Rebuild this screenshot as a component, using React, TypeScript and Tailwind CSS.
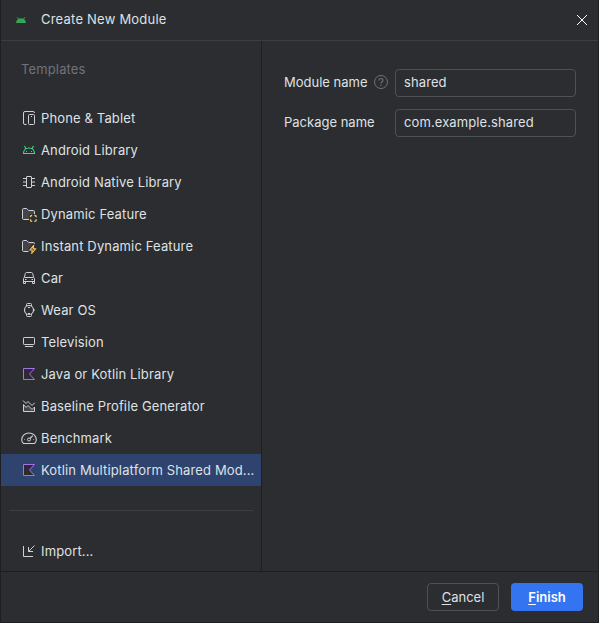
import type { ReactNode } from "react";
import clsx from "clsx";

interface Template {
  label: string;
  icon: ReactNode;
}

function Glyph({ children, color = "#ced0d6" }: { children: ReactNode; color?: string }) {
  return (
    <svg width="16" height="16" viewBox="0 0 16 16" fill="none" stroke={color} className="shrink-0">
      {children}
    </svg>
  );
}

const folder = (
  <path
    d="M8 13.500H2.500A1.200 1.200 0 0 1 1.500 12.300V3.700A1.200 1.200 0 0 1 2.700 2.500H5.700L7.700 4.500H12.300A1.200 1.200 0 0 1 13.500 5.700V8"
    fill="#43454a"
  />
);

const templates: Template[] = [
  {
    label: "Phone & Tablet",
    icon: (
      <Glyph>
        <path d="M5.500 14.500H4A1.500 1.500 0 0 1 2.500 13V3A1.500 1.500 0 0 1 4 1.500H12A1.500 1.500 0 0 1 13.500 3" />
        <rect x="7.500" y="4.500" width="6" height="10" rx="1" />
        <path d="M10 6.500H11" />
      </Glyph>
    ),
  },
  {
    label: "Android Library",
    icon: (
      <Glyph color="#3ddc84">
        <path d="M2.500 11.500C2.500 8 5 6 8 6S13.500 8 13.500 11.500ZM3.500 4 5 6.800M12.500 4 11 6.800" strokeWidth="1.100" />
        <path d="M5 9.500H6M10 9.500H11" />
      </Glyph>
    ),
  },
  {
    label: "Android Native Library",
    icon: (
      <Glyph>
        <rect x="5.500" y="2.500" width="5" height="11" rx="0.5" />
        <path d="M2 4.500H5M2 11.500H5M11 4.500H14M11 11.500H14" />
        <path d="M2 8H5M11 8H14" />
      </Glyph>
    ),
  },
  {
    label: "Dynamic Feature",
    icon: (
      <Glyph>
        {folder}
        <rect x="8" y="8" width="8" height="8" fill="#2b2d30" stroke="none" />
        <path
          d="M9.500 11.200V10.500Q9.500 9.500 10.500 9.500H11.200M13.300 9.500H14Q15.200 9.500 15.200 10.700V11.200M15.200 13.300V14Q15.200 15.300 14 15.300H13.300M11.200 15.300H10.500Q9.500 15.300 9.500 14V13.300"
          stroke="#f2c55c"
          strokeWidth="1.300"
        />
      </Glyph>
    ),
  },
  {
    label: "Instant Dynamic Feature",
    icon: (
      <Glyph>
        {folder}
        <path d="M11 6H16V16H7.500V11Z" fill="#2b2d30" stroke="none" />
        <path
          d="M12.700 7.300 8.700 12H11.200L10.700 15.500 14.800 10.700H12.200Z"
          fill="#5e4d33"
          stroke="#f2c55c"
          strokeWidth="1.100"
          strokeLinejoin="round"
        />
      </Glyph>
    ),
  },
  {
    label: "Car",
    icon: (
      <Glyph>
        <path d="M3.500 7 4.300 3.500Q4.600 2.500 5.500 2.500H10.500Q11.400 2.500 11.700 3.500L12.500 7" />
        <path d="M2.500 13.500V8.500Q2.500 7.500 3.700 7.500H12.300Q13.500 7.500 13.500 8.500V13.500H11.500V11.500H4.500V13.500Z" />
        <path d="M2.500 11.500H13.500M4 9.500H5.500M10.500 9.500H12" />
      </Glyph>
    ),
  },
  {
    label: "Wear OS",
    icon: (
      <Glyph>
        <circle cx="8" cy="8" r="4.500" strokeWidth="1.200" />
        <path d="M5.500 4V2.500Q5.500 1.500 6.500 1.500H9.500Q10.500 1.500 10.500 2.500V4M5.500 12V13.500Q5.500 14.500 6.500 14.500H9.500Q10.500 14.500 10.500 13.500V12M13 7V9M7 5.500H9M7 11.500H9" />
      </Glyph>
    ),
  },
  {
    label: "Television",
    icon: (
      <Glyph>
        <rect x="2.500" y="3.500" width="11" height="7" rx="0.7" />
        <path d="M4 12.500H12" />
      </Glyph>
    ),
  },
  {
    label: "Java or Kotlin Library",
    icon: (
      <Glyph color="#a571e6">
        <path d="M2.500 2.500H13.500L8.500 8 13.500 13.500H2.500Z" fill="#2f2936" />
      </Glyph>
    ),
  },
  {
    label: "Baseline Profile Generator",
    icon: (
      <Glyph>
        <path d="M2.500 6.500V13.500H13.500V9L11 11.500 7 7.500 5 9.500Z" fill="#43454a" />
        <path d="M2 2.500 5 5.500 7 3.500 11 7.500 13.800 4.700" />
      </Glyph>
    ),
  },
  {
    label: "Benchmark",
    icon: (
      <Glyph>
        <path d="M2.500 13.500Q.7 12.300 .7 9.800C.7 5.800 4 3 8 3S15.300 5.800 15.300 9.800Q15.300 12.300 13.500 13.500Z" strokeWidth="1.100" />
        <circle cx="8" cy="9.500" r="1.500" />
        <path d="M9 8.500 11.800 5.700" strokeWidth="1.200" />
        <path d="M3 9.500H4M12 9.500H13" strokeOpacity=".6" />
      </Glyph>
    ),
  },
  {
    label: "Kotlin Multiplatform Shared Mod...",
    icon: (
      <Glyph color="#a571e6">
        <path d="M2.500 2.500H13.500L8.500 8 13.500 13.500H2.500Z" fill="#2f2936" />
      </Glyph>
    ),
  },
];

function TemplateRow({ label, icon, selected }: Template & { selected?: boolean }) {
  return (
    <div className={clsx("flex h-8 items-center gap-1 pl-5", selected && "bg-[#2e436e]")}>
      {icon}
      <span className="whitespace-nowrap">{label}</span>
    </div>
  );
}

function Field({ label, value, help }: { label: string; value: string; help?: boolean }) {
  return (
    <div className="flex h-7 items-center">
      <label className="flex w-[111px] items-center justify-between pr-1.5 tracking-normal">
        <span className="pb-0.5">{label}</span>
        {help && (
          <svg width="16" height="16" viewBox="0 0 16 16" fill="none" stroke="#6f737a" className="mb-0.5">
            <circle cx="8" cy="8" r="6.500" />
            <path d="M6 6.500C6 3.900 10 3.900 10 6.300 10 7.800 8 7.700 8 9.500" strokeWidth="1.100" />
            <circle cx="8" cy="11.300" r=".7" fill="#6f737a" stroke="none" />
          </svg>
        )}
      </label>
      <div className="flex h-7 w-[181px] items-center rounded border border-[#4e5157] pb-0.5 pl-2 tracking-[0.1px]">
        {value}
      </div>
    </div>
  );
}

export default function App() {
  return (
    <div className="flex h-[623px] w-[599px] flex-col border-x border-b border-[#1e1f22] bg-[#2b2d30] font-['Inter',sans-serif] text-[13px] leading-4 tracking-[0.14px] text-[#dfe1e5]">
      <header className="flex h-[41px] shrink-0 items-center border-b border-[#3c3e41] pl-3">
        <svg width="16" height="16" viewBox="0 0 16 16" fill="#34a853">
          <path d="M3 11C3.200 9 4 7.900 5 7.200L4 5.300 4.700 5 5.700 6.700Q8 5.900 10.300 6.700L11.300 5 12 5.300 11 7.200C12 7.900 12.800 9 13 11Z" />
        </svg>
        <span className="ml-3 pb-0.5 tracking-[0.22px]">Create New Module</span>
        <svg width="12" height="12" viewBox="0 0 12 12" stroke="#ffffff" className="ml-auto mr-2.5">
          <path d="M1 1 11 11M11 1 1 11" />
        </svg>
      </header>

      <main className="flex min-h-0 flex-1">
        <aside className="flex w-[261px] flex-col border-r border-[#1e1f22]">
          <div className="flex h-[61px] items-start pl-5 pt-5 text-[#6f737a]">Templates</div>
          {templates.map((template, index) => (
            <TemplateRow key={template.label} {...template} selected={index === templates.length - 1} />
          ))}
          <hr className="mx-2 mt-6 border-[#3c3e41]" />
          <div className="mt-6">
            <TemplateRow
              label="Import..."
              icon={
                <Glyph>
                  <path d="M2.500 3V13.500H12M13.500 2.500 7.500 8.500M7.500 4V8.500H12" />
                </Glyph>
              }
            />
          </div>
        </aside>

        <section className="flex flex-col gap-3 pl-[22px] pt-7">
          <Field label="Module name" value="shared" help />
          <Field label="Package name" value="com.example.shared" />
        </section>
      </main>

      <footer className="flex h-[51px] shrink-0 items-center justify-end gap-3 border-t border-[#1e1f22] pr-[15px]">
        <button className="h-7 w-[72px] rounded border border-[#4e5157] tracking-normal">
          <span className="underline underline-offset-2">C</span>ancel
        </button>
        <button className="h-7 w-[72px] rounded bg-[#3574f0] font-semibold tracking-normal text-white">
          <span className="underline underline-offset-2">F</span>inish
        </button>
      </footer>
    </div>
  );
}
